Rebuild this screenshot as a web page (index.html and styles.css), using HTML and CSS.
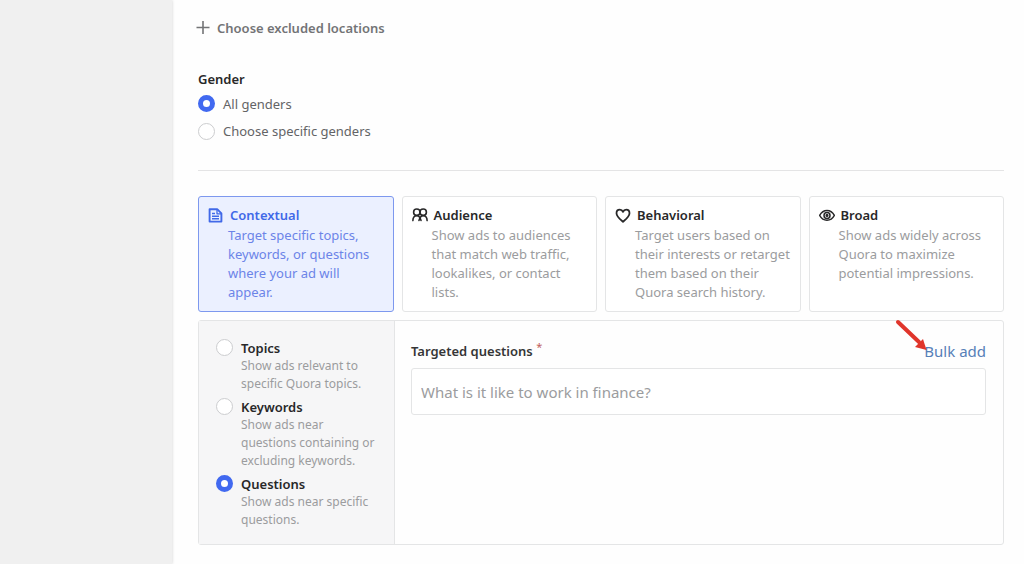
FILE: index.html
```html
<!DOCTYPE html>
<html lang="en">

<head>
    <meta charset="UTF-8">
    <meta name="viewport" content="width=device-width, initial-scale=1.0">
    <link rel="stylesheet" href="styles.css">
    <title>Ad set targeting</title>
</head>

<body>
    <aside class="sidebar"></aside>
    <main class="content">
        <button type="button" class="add-location">
            <svg width="14" height="14" viewBox="0 0 14 14" fill="none" stroke="currentColor" stroke-width="1.6">
                <path d="M7 0v13M0.5 6.500h13" />
            </svg>
            Choose excluded locations
        </button>

        <fieldset class="gender">
            <legend>Gender</legend>
            <label class="radio-row"><input type="radio" name="gender" checked> All genders</label>
            <label class="radio-row"><input type="radio" name="gender"> Choose specific genders</label>
        </fieldset>

        <div class="cards">
            <button type="button" class="card selected">
                <span class="card-title">
                    <svg width="16" height="16" viewBox="0 0 16 16" fill="none" stroke="currentColor" stroke-width="1.9" stroke-linejoin="round">
                        <path d="M1.600 1.200h7.600L13.400 5.400v8.200H1.600z" />
                        <path d="M9 1.200v4.600h4.400" stroke-width="1.3" />
                        <path d="M4 5.500h3M4 8.200h7M4 10.800h7" stroke-width="1.4" />
                    </svg>
                    Contextual
                </span>
                <span class="card-text">Target specific topics, keywords, or questions where your ad will appear.</span>
            </button>
            <button type="button" class="card">
                <span class="card-title">
                    <svg width="16" height="16" viewBox="0 0 16 16" fill="none" stroke="currentColor" stroke-width="1.6" stroke-linecap="round">
                        <circle cx="4.800" cy="4.200" r="3.200" />
                        <circle cx="11.200" cy="4.200" r="3.200" />
                        <path d="M0.900 12.600c0-3 1.500-4.800 3.900-4.800s3.400 1.600 4.200 4.600" />
                        <path d="M15.100 12.600c0-3-1.500-4.800-3.900-4.800s-3.400 1.600-4.200 4.600" />
                    </svg>
                    Audience
                </span>
                <span class="card-text">Show ads to audiences that match web traffic, lookalikes, or contact lists.</span>
            </button>
            <button type="button" class="card">
                <span class="card-title">
                    <svg width="16" height="16" viewBox="0 0 16 16" fill="none" stroke="currentColor" stroke-width="1.800" stroke-linejoin="round">
                        <path d="M8 13.800C5 11.200 1.500 8.400 1.500 5.200 1.500 3.100 3 1.700 4.800 1.700 6.200 1.700 7.400 2.500 8 3.900 8.600 2.500 9.800 1.700 11.200 1.700 13 1.700 14.500 3.100 14.500 5.200 14.500 8.400 11 11.200 8 13.800z" />
                    </svg>
                    Behavioral
                </span>
                <span class="card-text">Target users based on their interests or retarget them based on their Quora search history.</span>
            </button>
            <button type="button" class="card">
                <span class="card-title">
                    <svg width="16" height="16" viewBox="0 0 16 16" fill="none" stroke="currentColor" stroke-width="1.500" stroke-linejoin="round">
                        <path d="M0.600 7.400C2.400 4.100 5 2.500 8 2.500s5.600 1.600 7.400 4.900c-1.800 3.300-4.400 4.900-7.400 4.900S2.400 10.700 0.600 7.400z" />
                        <circle cx="8" cy="7.400" r="3" />
                        <circle cx="8" cy="7.400" r="0.800" />
                    </svg>
                    Broad
                </span>
                <span class="card-text">Show ads widely across Quora to maximize potential impressions.</span>
            </button>
        </div>

        <section class="panel">
            <div class="options">
                <label class="option">
                    <input type="radio" name="context">
                    <span><b>Topics</b>Show ads relevant to specific Quora topics.</span>
                </label>
                <label class="option">
                    <input type="radio" name="context">
                    <span><b>Keywords</b>Show ads near questions containing or excluding keywords.</span>
                </label>
                <label class="option">
                    <input type="radio" name="context" checked>
                    <span><b>Questions</b>Show ads near specific questions.</span>
                </label>
            </div>
            <div class="questions">
                <div class="questions-head">
                    <label for="question">Targeted questions <sup>*</sup></label>
                    <div class="bulk">
                        <a href="#">Bulk add</a>
                        <svg class="arrow" width="32" height="32" viewBox="0 0 32 32">
                            <path d="M3 3L24 23" stroke="#e0352b" stroke-width="4" stroke-linecap="round" />
                            <path d="M31.500 31L28 20 20 28z" fill="#e0352b" />
                        </svg>
                    </div>
                </div>
                <input type="text" id="question" placeholder="What is it like to work in finance?">
            </div>
        </section>
    </main>
</body>

</html>
```
FILE: styles.css
```css
* {
    box-sizing: border-box;
}

body {
    margin: 0;
    display: flex;
    min-height: 100vh;
    background-color: #fefefe;
    font-family: "Noto Sans", "Open Sans", sans-serif;
    font-size: 13px;
    color: #636466;
}

button,
input {
    font-family: inherit;
}

.sidebar {
    flex: 0 0 172px;
    background-color: #f0f0f0;
    box-shadow: 0 0 3px #d0d0d0;
}

.content {
    flex: 1;
    padding: 18px 20px 18px 26px;
}

.add-location {
    display: flex;
    align-items: center;
    gap: 7px;
    height: 20px;
    margin-left: -2px;
    padding: 0;
    border: none;
    background: none;
    font-size: 13px;
    font-weight: 600;
    color: #737476;
}

.gender {
    margin: 31px 0 25px;
    padding: 1px 0 25px;
    border: none;
    border-bottom: 1px solid #e4e4e5;
}

.gender legend {
    padding: 0;
    line-height: 20px;
    font-weight: 600;
    color: #282829;
}

.radio-row {
    display: flex;
    align-items: center;
    gap: 8px;
    height: 27px;
}

.radio-row:last-child {
    height: 28px;
}

input[type="radio"] {
    appearance: none;
    flex: none;
    width: 17px;
    height: 17px;
    margin: 0;
    border: 1px solid #cccdcf;
    border-radius: 50%;
    background-color: #fff;
}

input[type="radio"]:checked {
    border: 5px solid #4169f0;
}

.cards {
    display: grid;
    grid-template-columns: repeat(4, 1fr);
    gap: 8px;
}

.card {
    display: flex;
    flex-direction: column;
    min-height: 116px;
    padding: 8px 9px;
    border: 1px solid #e4e5e6;
    border-radius: 3px;
    background-color: #fff;
    text-align: left;
    font-size: 13px;
    color: #9b9c9e;
}

.card-title {
    display: flex;
    align-items: center;
    gap: 6px;
    line-height: 21px;
    font-weight: 600;
    color: #282829;
}

.card-text {
    padding-left: 20px;
    line-height: 19px;
}

.card.selected {
    border-color: #7d98ee;
    background-color: #ebf0ff;
    color: #6c84e8;
}

.card.selected .card-title {
    color: #4169e8;
}

.panel {
    display: flex;
    min-height: 225px;
    margin-top: 8px;
    border: 1px solid #e4e5e6;
    border-radius: 3px;
}

.options {
    display: flex;
    flex-direction: column;
    gap: 5px;
    flex: 0 0 196px;
    padding: 18px 16px 14px 17px;
    border-right: 1px solid #e4e5e6;
    background-color: #f6f6f7;
}

.option {
    display: flex;
    gap: 8px;
    line-height: 18px;
    font-size: 12px;
    color: #9b9c9e;
}

.option b {
    display: block;
    font-size: 13px;
    font-weight: 600;
    color: #282829;
}

.questions {
    flex: 1;
    padding: 18px 17px 18px 16px;
}

.questions-head {
    display: flex;
    justify-content: space-between;
    align-items: center;
    height: 24px;
    margin-bottom: 5px;
}

.questions-head label {
    font-weight: 600;
    color: #353637;
}

.questions-head sup {
    line-height: 0;
    font-size: 11px;
    font-weight: 400;
    color: #c0605c;
}

.bulk {
    position: relative;
}

.bulk a {
    font-size: 15px;
    color: #5680b8;
    text-decoration: none;
}

/* pointer that lies over the corner of the panel */
.arrow {
    position: absolute;
    right: calc(100% - 3px);
    bottom: 50%;
}

#question {
    width: 100%;
    height: 47px;
    padding: 0 9px;
    border: 1px solid #e4e5e6;
    border-radius: 3px;
    background-color: #fff;
    font-size: 15px;
    color: #282829;
}

#question::placeholder {
    color: #9b9c9e;
}
```
